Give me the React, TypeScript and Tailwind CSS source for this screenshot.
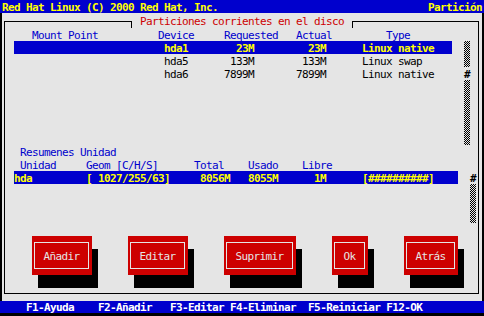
type Part = { dev: string; req: string; act: string; type: string; sel?: boolean };

const parts: Part[] = [
  { dev: "hda1", req: "23M", act: "23M", type: "Linux native", sel: true },
  { dev: "hda5", req: "133M", act: "133M", type: "Linux swap" },
  { dev: "hda6", req: "7899M", act: "7899M", type: "Linux native" },
];

const buttons = [
  { label: "Añadir", width: "w-[60px]" },
  { label: "Editar", width: "w-[60px]" },
  { label: "Suprimir", width: "w-[72px]" },
  { label: "Ok", width: "w-[36px]" },
  { label: "Atrás", width: "w-[54px]" },
];

const checker =
  "bg-[image:repeating-conic-gradient(#000_0_25%,#e5e5e5_0_50%)] bg-[length:2px_2px]";

function PartRow({ p }: { p: Part }) {
  return (
    <div
      className={`flex h-[13px] whitespace-pre leading-[15px] ${
        p.sel ? "bg-[#0000cd] font-bold text-[#ffff00]" : "text-black"
      }`}
    >
      <span className="w-[150px] shrink-0" />
      <span className="w-[60px] shrink-0">{p.dev}</span>
      <span className="w-[30px] shrink-0 text-right">{p.req}</span>
      <span className="w-[72px] shrink-0 text-right">{p.act}</span>
      <span className="w-[36px] shrink-0" />
      <span>{p.type}</span>
    </div>
  );
}

export default function App() {
  return (
    <div className="flex h-[316px] w-[484px] flex-col overflow-hidden bg-black font-['DejaVu_Sans_Mono',monospace] text-[11px] tracking-[-0.62px]">
      <div className="flex h-[13px] shrink-0 justify-between whitespace-pre bg-[#0000cd] px-[2px] font-bold leading-[16px] text-[#ffff00]">
        <span>Red Hat Linux (C) 2000 Red Hat, Inc.</span>
        <span>Partición</span>
      </div>

      <div className="mx-[2px] flex h-[288px] shrink-0 flex-col bg-[#e5e5e5] pl-[2px] pr-[3px]">
        {/* window title on the frame */}
        <div className="flex h-[15px] shrink-0">
          <div className="mt-[8px] h-[7px] w-[128px] shrink-0 border-l border-r border-t border-black" />
          <div className="w-[220px] shrink-0 whitespace-pre pl-[8px] pt-[2px] leading-[13px] text-[#cd0000]">
            Particiones corrientes en el disco
          </div>
          <div className="mt-[8px] h-[7px] flex-1 border-l border-r border-t border-black" />
        </div>

        <div className="flex h-[266px] shrink-0 flex-col border-b border-l border-r border-black">
          <div className="flex h-[13px] whitespace-pre pl-[9px] leading-[15px] text-[#0000cd]">
            <span className="w-[18px] shrink-0" />
            <span className="w-[126px] shrink-0">Mount Point</span>
            <span className="w-[66px] shrink-0">Device</span>
            <span className="w-[72px] shrink-0">Requested</span>
            <span className="w-[90px] shrink-0">Actual</span>
            <span>Type</span>
          </div>

          <div className="flex h-[104px]">
            <div className="ml-[9px] flex w-[438px] flex-col">
              {parts.map((p) => (
                <PartRow key={p.dev} p={p} />
              ))}
            </div>
            <div className="ml-[12px] flex w-[6px] flex-col">
              <div className={`h-[26px] ${checker}`} />
              <div className="h-[13px] font-bold leading-[15px] text-black">#</div>
              <div className={`h-[65px] ${checker}`} />
            </div>
          </div>

          <div className="h-[13px] whitespace-pre pl-[15px] leading-[15px] text-[#0000cd]">Resumenes Unidad</div>
          <div className="flex h-[13px] whitespace-pre pl-[9px] leading-[15px] text-[#0000cd]">
            <span className="w-[6px] shrink-0" />
            <span className="w-[66px] shrink-0">Unidad</span>
            <span className="w-[108px] shrink-0">Geom [C/H/S]</span>
            <span className="w-[54px] shrink-0">Total</span>
            <span className="w-[54px] shrink-0">Usado</span>
            <span>Libre</span>
          </div>

          <div className="flex h-[52px]">
            <div className="ml-[9px] flex w-[444px] flex-col">
              <div className="flex h-[13px] whitespace-pre bg-[#0000cd] font-bold leading-[15px] text-[#ffff00]">
                <span className="w-[72px] shrink-0">hda</span>
                <span className="w-[114px] shrink-0">[ 1027/255/63]</span>
                <span className="w-[48px] shrink-0">8056M</span>
                <span className="w-[66px] shrink-0">8055M</span>
                <span className="w-[48px] shrink-0">1M</span>
                <span>[##########]</span>
              </div>
            </div>
            <div className="ml-[12px] flex w-[6px] flex-col">
              <div className="h-[13px] font-bold leading-[15px] text-black">#</div>
              <div className={`h-[39px] ${checker}`} />
            </div>
          </div>

          <div className="mt-[13px] flex h-[39px] gap-[36px] pl-[27px]">
            {buttons.map((b) => (
              <div
                key={b.label}
                className={`${b.width} h-[39px] shrink-0 bg-[#cd0000] py-[6px] pl-[2px] pr-[3px] shadow-[6px_13px_0_0_#000]`}
              >
                <div className="flex h-full justify-center whitespace-pre border border-[#e5e5e5] pt-[6px] leading-[15px] text-[#e5e5e5]">
                  {b.label}
                </div>
              </div>
            ))}
          </div>
        </div>
      </div>

      <div className="h-[12px] shrink-0 whitespace-pre bg-[#0000cd] pl-[26px] font-bold leading-[13px] text-white">
        F1-Ayuda    F2-Añadir   F3-Editar F4-Eliminar  F5-Reiniciar F12-OK
      </div>
    </div>
  );
}
